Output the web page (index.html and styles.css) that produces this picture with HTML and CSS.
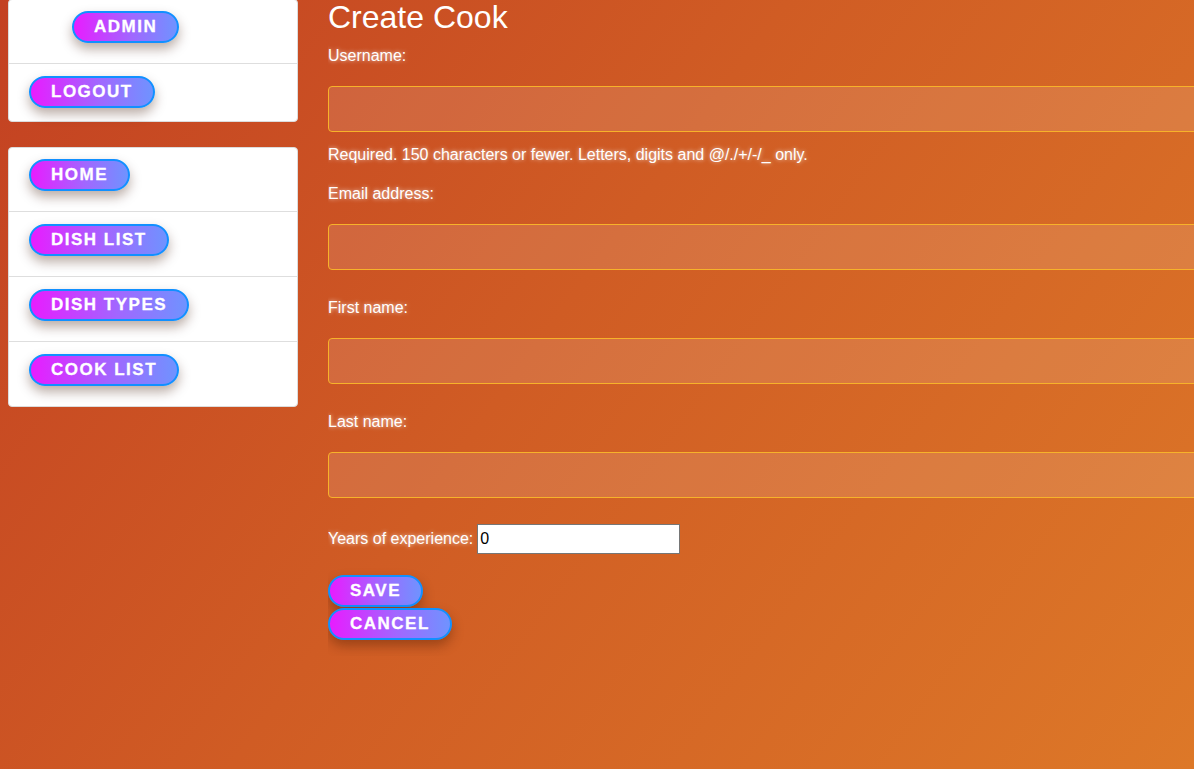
FILE: index.html
```html
<!DOCTYPE html>
<html lang="en">
<head>
<meta charset="utf-8">
<title>Create Cook</title>
<link rel="stylesheet" href="styles.css">
</head>
<body>
<div class="page">
  <aside class="sidebar">
    <ul class="panel panel-user">
      <li class="panel-row row-admin"><a class="pill" href="#">Admin</a></li>
      <li class="panel-row row-logout"><a class="pill" href="#">Logout</a></li>
    </ul>
    <ul class="panel panel-nav">
      <li class="panel-row"><a class="pill" href="#">Home</a></li>
      <li class="panel-row"><a class="pill" href="#">Dish list</a></li>
      <li class="panel-row"><a class="pill" href="#">Dish types</a></li>
      <li class="panel-row"><a class="pill" href="#">Cook list</a></li>
    </ul>
  </aside>
  <main class="content">
    <h1 class="title">Create Cook</h1>
    <form class="cook-form" action="#">
      <div class="field field-first">
        <label class="field-label" for="id_username">Username:</label>
        <input class="field-input" type="text" id="id_username" name="username">
        <span class="helptext">Required. 150 characters or fewer. Letters, digits and @/./+/-/_ only.</span>
      </div>
      <div class="field field-after-help">
        <label class="field-label" for="id_email">Email address:</label>
        <input class="field-input" type="email" id="id_email" name="email">
      </div>
      <div class="field">
        <label class="field-label" for="id_first_name">First name:</label>
        <input class="field-input" type="text" id="id_first_name" name="first_name">
      </div>
      <div class="field">
        <label class="field-label" for="id_last_name">Last name:</label>
        <input class="field-input" type="text" id="id_last_name" name="last_name">
      </div>
      <div class="field-inline">
        <label class="inline-label" for="id_years">Years of experience:</label>
        <input class="years-input" type="number" id="id_years" name="years_of_experience" value="0">
      </div>
      <div class="actions">
        <button class="pill" type="submit">Save</button>
        <a class="pill" href="#">Cancel</a>
      </div>
    </form>
  </main>
</div>
</body>
</html>
```
FILE: styles.css
```css
html {
  min-height: 100%;
  background: linear-gradient(126deg, #c34122 0%, #d05c24 45%, #dd7828 100%);
}

body {
  margin: 0;
  font-family: "Liberation Sans", Arial, sans-serif;
  color: #fff;
}

.page {
  display: flex;
  align-items: flex-start;
}

/* Sidebar */
.sidebar {
  flex: none;
  width: 290px;
  margin-left: 8px;
}

.panel {
  list-style: none;
  margin: 0;
  padding: 0;
  background: #fff;
  border: 1px solid #dcdcdc;
  border-radius: 4px;
}

.panel-user {
  margin-top: -1px;
}

.panel-nav {
  margin-top: 25px;
}

.panel-row {
  display: flex;
  padding: 12px 0 20px 20px;
  border-top: 1px solid #dedede;
}

.panel-row:first-child {
  border-top: none;
  padding-top: 11px;
}

.row-admin {
  padding-left: 63px;
}

.row-logout {
  padding-bottom: 13px;
}

/* Pill buttons */
.pill {
  display: inline-block;
  box-sizing: border-box;
  height: 32px;
  margin: 0;
  padding: 0 20px;
  border: 2px solid #1190ff;
  border-radius: 16px;
  background: linear-gradient(90deg, #e81cff 0%, #a266ff 55%, #6f93ff 100%);
  color: #fff;
  font-family: "Liberation Sans", Arial, sans-serif;
  font-weight: bold;
  font-size: 17px;
  line-height: 28px;
  letter-spacing: 1.5px;
  text-transform: uppercase;
  text-decoration: none;
  text-align: center;
  white-space: nowrap;
  -webkit-text-stroke: 0.3px #fff;
  box-shadow: 0 6px 12px rgba(60, 20, 0, 0.35);
  cursor: pointer;
}

/* Content */
.content {
  flex: 1;
  min-width: 0;
  margin-left: 30px;
  overflow: hidden;
}

.title {
  margin: 0;
  font-size: 32px;
  line-height: 35px;
  font-weight: normal;
}

.field {
  margin-top: 29px;
}

.field-first {
  margin-top: 12px;
}

.field-after-help {
  margin-top: 21px;
}

.field-label,
.helptext,
.inline-label {
  display: block;
  font-size: 16px;
  line-height: 18px;
  text-shadow: 0 0 4px rgba(255, 255, 255, 0.75);
}

.field-input {
  display: block;
  box-sizing: border-box;
  width: calc(100% + 20px);
  height: 46px;
  margin-top: 21px;
  border: 1px solid #f7b22a;
  border-radius: 4px;
  background: rgba(255, 255, 255, 0.12);
  color: #fff;
  font-size: 16px;
}

.helptext {
  margin-top: 14px;
}

.field-inline {
  display: flex;
  align-items: center;
  gap: 4px;
  margin-top: 26px;
}

.years-input {
  box-sizing: border-box;
  width: 203px;
  height: 30px;
  padding: 1px 2px;
  border: 1px solid #767676;
  background: #fff;
  color: #000;
  font-family: "Liberation Sans", Arial, sans-serif;
  font-size: 16px;
}

.actions {
  display: flex;
  flex-direction: column;
  align-items: flex-start;
  gap: 1px;
  margin-top: 21px;
  padding-bottom: 16px;
}
```
